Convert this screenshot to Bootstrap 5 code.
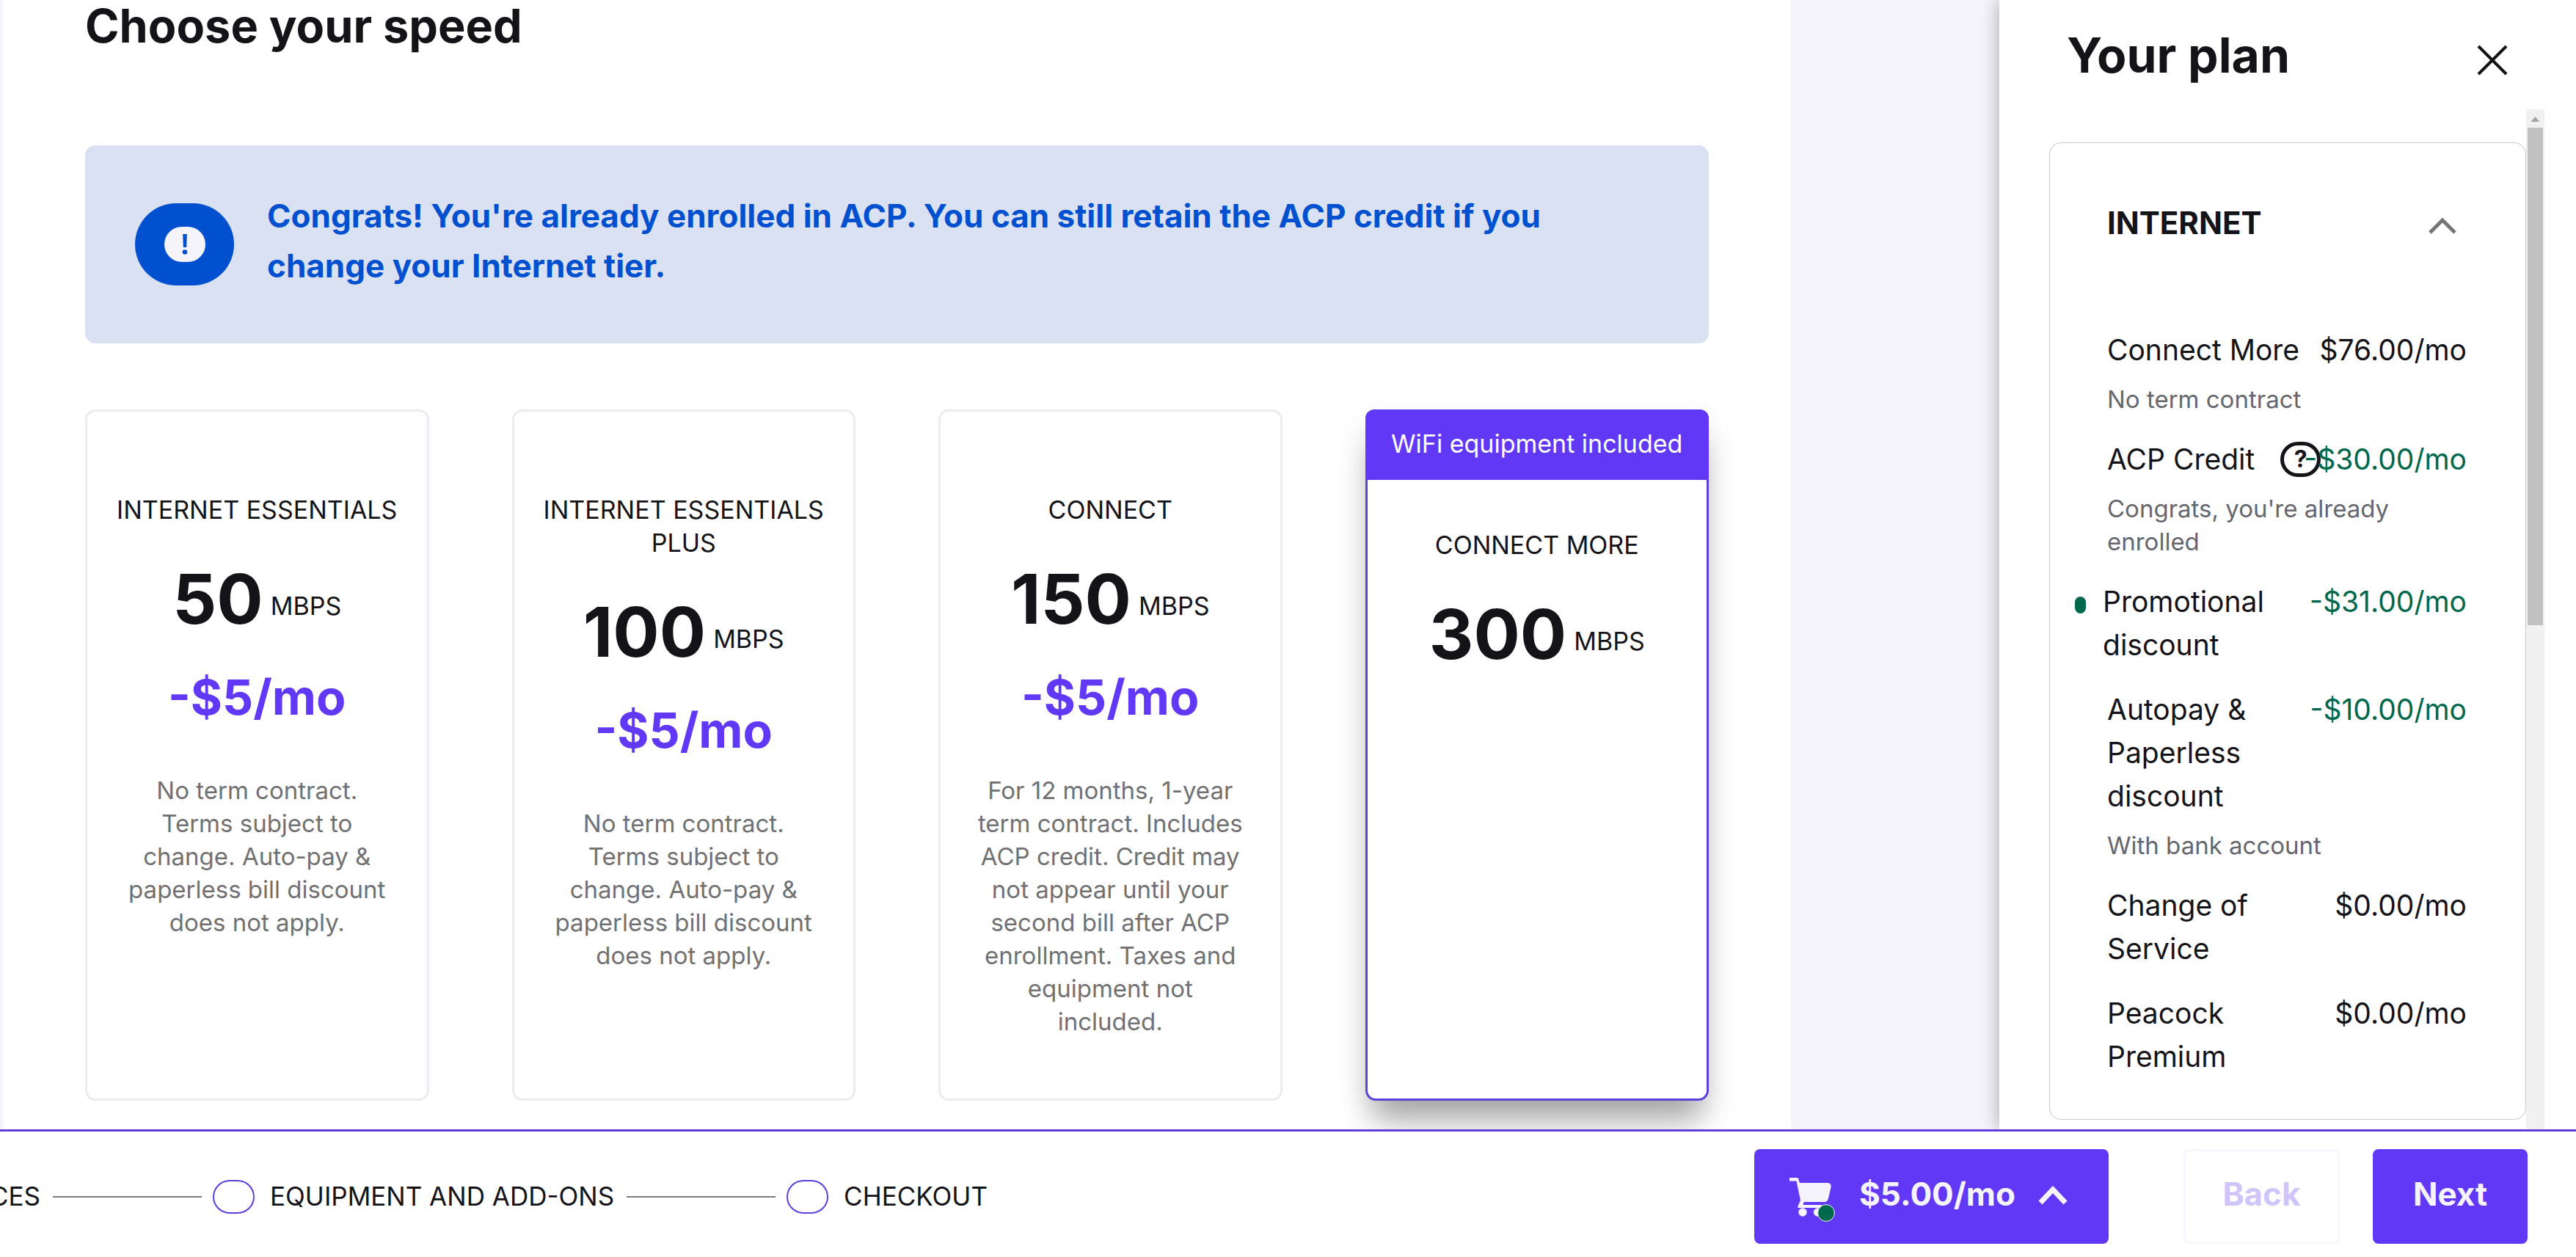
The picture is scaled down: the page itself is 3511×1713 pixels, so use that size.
<!DOCTYPE html>
<html lang="en">
<head>
<meta charset="utf-8">
<meta name="viewport" content="width=device-width, initial-scale=1">
<title>Choose your speed</title>
<link href="https://cdn.jsdelivr.net/npm/bootstrap@5.3.0/dist/css/bootstrap.min.css" rel="stylesheet">
<style>
:root { --ink: #141418; --violet: #6138f5; --violet-line: #5f3fdb; --green: #00684d; --blue: #0050d0; }
body { font-family: Inter, "Liberation Sans", sans-serif; color: var(--ink); background: #f5f4fa; }
.shell { background: #f5f4fa; }
.speed-page { padding: 0 112px; margin-left: 4px; }
.page-gutter { width: 284px; }
.page-title { font-size: 63px; line-height: 70px; margin-bottom: 128px; }

.notice { background: #dae1f3; color: var(--blue); border-radius: 14px; padding: 62px 68px 72px; gap: 45px; }
.notice p { font-size: 44px; line-height: 68px; }
.notice-icon { width: 135px; height: 112px; border-radius: 56px; background: var(--blue); margin-top: 17px; }
.notice-icon span { width: 56px; height: 48px; border-radius: 24px; background: #f5f4fa; }

.tiers { gap: 113px; margin-top: 90px; min-height: 942px; }
.tier { flex: 1 1 0; min-width: 0; border: 3px solid #ebebf2; border-radius: 14px; background: #fff; }
.tier-body { padding: 111px 36px 40px; }
.tier-name, .tier-unit { font-size: 34px; line-height: 45px; }
.tier-speed { margin-top: 49px; gap: 10px; }
.tier-number { font-size: 94px; line-height: 100px; }
.tier-unit { padding-bottom: 18px; }
.tier-price { font-size: 66px; line-height: 80px; margin-top: 44px; color: var(--violet); }
.tier-note { font-size: 33px; line-height: 45px; margin-top: 65px; color: #717173; padding: 0 8px; }
.tier-selected { border-color: var(--violet-line); box-shadow: 0 36px 44px -10px rgba(0,0,0,.34), 0 8px 44px rgba(0,0,0,.05); }
.tier-selected .tier-body { padding-top: 66px; }
.tier-flag { background: var(--violet); color: #fff; font-size: 34px; line-height: 94px; margin: -3px -3px 0; padding-bottom: 2px; border-radius: 12px 12px 0 0; }

.plan { width: 786px; padding-left: 68px; box-shadow: -2px 0 22px rgba(0,0,0,.28); }
.plan-head { height: 149px; padding: 0 91px 0 24px; }
.plan-head h2 { font-size: 66px; line-height: 80px; }
.plan-head button { padding-top: 14px; }
.plan-scroll { padding-right: 43px; }
.plan-card { margin-top: 45px; height: 1332px; min-width: 0; border: 1px solid #c9c9cd; border-radius: 16px; padding: 79px 80px 0 78px; }
.plan-card h3 { font-size: 42px; line-height: 60px; }
.section-head { margin-bottom: 113px; padding-right: 14px; }
.line-list { gap: 29px; }
.line-main { font-size: 39px; line-height: 59px; }
.line-main .col { min-width: 0; }
.line-sub { font-size: 33px; line-height: 45px; margin-top: 16px; color: #66666e; }
.credit { color: var(--green); }
.bulleted { margin-left: -44px; }
.bullet { width: 15px; height: 23px; border-radius: 8px; background: var(--green); margin: 23px 23px 0 0; }
.help { width: 55px; height: 48px; border: 5px solid var(--ink); border-radius: 24px; font-size: 32px; line-height: 38px; background: #fff; color: var(--ink); margin-left: 35px; }
.bar-track { width: 25px; background: #f1f1f1; padding: 0 2px; }
.bar-track svg { display: block; }
.bar-thumb { height: 678px; background: #c1c1c1; }

.dock { background: #fff; border-top: 3px solid var(--violet-line); height: 174px; padding: 6px 66px 0 0; }
.steps { font-size: 35px; line-height: 45px; }
.steps li:first-child { margin-left: -14px; }
.steps li + li::before { content: ""; width: 203px; height: 2px; background: #7a7a7f; margin: 0 15px 0 17px; }
.step-dot { width: 57px; height: 46px; border: 2px solid var(--violet-line); border-radius: 23px; margin-right: 21px; }
.dock-btn { height: 129px; border-radius: 8px; font-size: 44px; line-height: 60px; font-weight: 700; border: 0; padding: 0 0 8px; min-width: 211px; }
.dock-primary, .dock-primary:hover { background: var(--violet); color: #f5f3fd; }
.dock-back, .dock-back:disabled { min-width: 213px; border: 3px solid #f7f6fe; color: #cfc5fb; background: #fff; opacity: 1; }
.dock-cart { width: 483px; padding: 0 56px 8px 48px; margin-right: 102px; }
.dock-next { margin-left: 45px; }
.cart-art { width: 64px; height: 60px; }
.plain-btn { border: 0; background: none; padding: 0; }
</style>
<script src="https://cdn.jsdelivr.net/npm/bootstrap@5.3.0/dist/js/bootstrap.bundle.min.js"></script>
</head>
<body>
<div class="shell vh-100 d-flex flex-column overflow-hidden">
  <div class="d-flex flex-grow-1 overflow-hidden">
    <main class="speed-page bg-white flex-grow-1">
      <h1 class="page-title fw-bold">Choose your speed</h1>
      <div class="notice d-flex align-items-start" role="status">
        <div class="notice-icon d-flex align-items-center justify-content-center flex-shrink-0">
          <span class="d-flex align-items-center justify-content-center">
            <svg width="10" height="28" viewBox="0 0 10 28" aria-hidden="true"><path d="M2.2 0h5.6l-.6 18H2.800z" fill="#0050d0"/><circle cx="5" cy="24.500" r="3.300" fill="#0050d0"/></svg>
          </span>
        </div>
        <p class="fw-bold mb-0">Congrats! You're already enrolled in ACP. You can still retain the ACP credit if you change your Internet tier.</p>
      </div>
      <div class="tiers d-flex text-center">
        <section class="tier">
          <div class="tier-body">
            <div class="tier-name">INTERNET ESSENTIALS</div>
            <div class="tier-speed d-flex justify-content-center align-items-end"><span class="tier-number fw-bold">50</span><span class="tier-unit">MBPS</span></div>
            <div class="tier-price fw-bold">-$5/mo</div>
            <p class="tier-note mb-0">No term contract. Terms subject to change. Auto-pay &amp; paperless bill discount does not apply.</p>
          </div>
        </section>
        <section class="tier">
          <div class="tier-body">
            <div class="tier-name">INTERNET ESSENTIALS PLUS</div>
            <div class="tier-speed d-flex justify-content-center align-items-end"><span class="tier-number fw-bold">100</span><span class="tier-unit">MBPS</span></div>
            <div class="tier-price fw-bold">-$5/mo</div>
            <p class="tier-note mb-0">No term contract. Terms subject to change. Auto-pay &amp; paperless bill discount does not apply.</p>
          </div>
        </section>
        <section class="tier">
          <div class="tier-body">
            <div class="tier-name">CONNECT</div>
            <div class="tier-speed d-flex justify-content-center align-items-end"><span class="tier-number fw-bold">150</span><span class="tier-unit">MBPS</span></div>
            <div class="tier-price fw-bold">-$5/mo</div>
            <p class="tier-note mb-0">For 12 months, 1-year term contract. Includes ACP credit. Credit may not appear until your second bill after ACP enrollment. Taxes and equipment not included.</p>
          </div>
        </section>
        <section class="tier tier-selected">
          <div class="tier-flag">WiFi equipment included</div>
          <div class="tier-body">
            <div class="tier-name">CONNECT MORE</div>
            <div class="tier-speed d-flex justify-content-center align-items-end"><span class="tier-number fw-bold">300</span><span class="tier-unit">MBPS</span></div>
          </div>
        </section>
      </div>
    </main>
    <div class="page-gutter flex-shrink-0"></div>
    <aside class="plan bg-white flex-shrink-0 d-flex flex-column">
      <div class="plan-head d-flex align-items-center justify-content-between">
        <h2 class="fw-bold mb-0">Your plan</h2>
        <button class="plain-btn d-flex" type="button" aria-label="Close">
          <svg width="46" height="46" viewBox="0 0 46 46" aria-hidden="true"><path d="M4 4l38 38M42 4L4 42" stroke="#141418" stroke-width="4" fill="none"/></svg>
        </button>
      </div>
      <div class="plan-scroll d-flex flex-grow-1">
        <section class="plan-card flex-grow-1">
          <div class="section-head d-flex align-items-center justify-content-between">
            <h3 class="fw-bold mb-0">INTERNET</h3>
            <button class="plain-btn d-flex pt-2" type="button" aria-label="Collapse Internet">
              <svg width="38" height="24" viewBox="0 0 38 24" aria-hidden="true"><path d="M2 21L19 4l17 17" stroke="#757577" stroke-width="5" fill="none"/></svg>
            </button>
          </div>
          <div class="line-list d-flex flex-column">
            <div>
              <div class="line-main d-flex"><span class="col">Connect More</span><span class="text-nowrap">$76.00/mo</span></div>
              <div class="line-sub">No term contract</div>
            </div>
            <div>
              <div class="line-main d-flex">
                <span class="col d-flex align-items-center text-nowrap">ACP Credit<button class="help p-0 flex-shrink-0 fw-bold" type="button" aria-label="About the ACP credit">?</button></span>
                <span class="credit text-nowrap position-relative">-$30.00/mo</span>
              </div>
              <div class="line-sub">Congrats, you're already enrolled</div>
            </div>
            <div class="line-main d-flex bulleted"><span class="bullet flex-shrink-0"></span><span class="col">Promotional discount</span><span class="credit text-nowrap">-$31.00/mo</span></div>
            <div>
              <div class="line-main d-flex"><span class="col">Autopay &amp; Paperless discount</span><span class="credit text-nowrap">-$10.00/mo</span></div>
              <div class="line-sub">With bank account</div>
            </div>
            <div class="line-main d-flex"><span class="col">Change of Service</span><span class="text-nowrap">$0.00/mo</span></div>
            <div class="line-main d-flex"><span class="col">Peacock Premium</span><span class="text-nowrap">$0.00/mo</span></div>
          </div>
        </section>
        <div class="bar-track flex-shrink-0" aria-hidden="true">
          <svg width="21" height="25" viewBox="0 0 21 25"><path d="M4.500 17l6-7 6 7z" fill="#a3a3a3"/></svg>
          <div class="bar-thumb"></div>
        </div>
      </div>
    </aside>
  </div>
  <footer class="dock position-relative d-flex align-items-center flex-shrink-0">
    <ol class="steps list-unstyled d-flex align-items-center mb-0 flex-grow-1 text-nowrap">
      <li>CES</li>
      <li class="d-flex align-items-center"><span class="step-dot"></span>EQUIPMENT AND ADD-ONS</li>
      <li class="d-flex align-items-center"><span class="step-dot"></span>CHECKOUT</li>
    </ol>
    <button class="btn dock-btn dock-primary dock-cart d-flex align-items-center justify-content-between" type="button">
      <svg class="cart-art mt-3" viewBox="0 0 64 60" aria-hidden="true">
        <path d="M0 0h10.500q1.500 0 2 2l1.300 5H52q5.500 0 4.500 6l-3.500 15q-1.200 5-5 5H20q-1.500 1.500-1.500 4H44v4H11.500v-2.500L15 31 9.500 4.500H0z" fill="#f5f3fd"/>
        <circle cx="18" cy="47" r="5.700" fill="#f5f3fd"/><circle cx="38.500" cy="47" r="5.700" fill="#f5f3fd"/>
        <circle cx="50" cy="48" r="11.400" fill="#00684d" stroke="#f5f3fd" stroke-width="1"/>
      </svg>
      <span>$5.00/mo</span>
      <svg class="mt-1" width="40" height="26" viewBox="0 0 40 26" aria-hidden="true"><path d="M3 23L20 5l17 18" stroke="#f5f3fd" stroke-width="7" fill="none"/></svg>
    </button>
    <button class="btn dock-btn dock-back" type="button" disabled>Back</button>
    <button class="btn dock-btn dock-primary dock-next" type="button">Next</button>
  </footer>
</div>
</body>
</html>
